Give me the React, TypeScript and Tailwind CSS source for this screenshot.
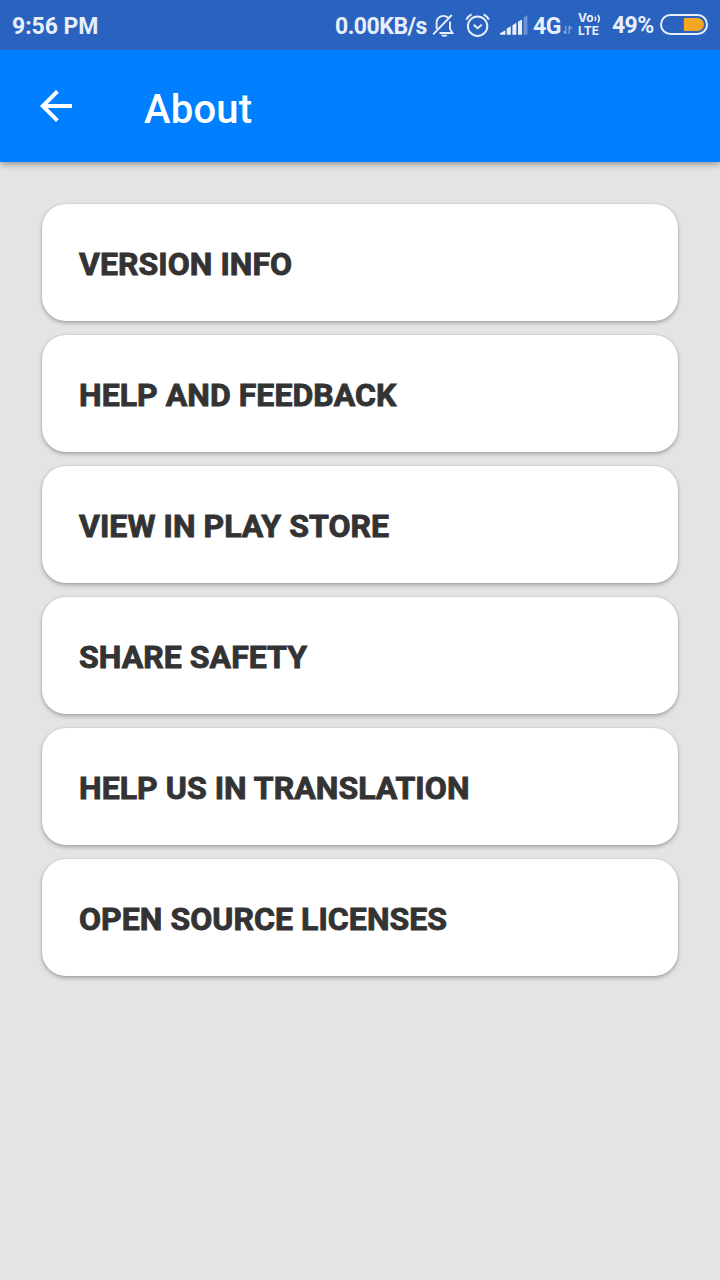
import React from "react";

const items: string[] = [
  "VERSION INFO",
  "HELP AND FEEDBACK",
  "VIEW IN PLAY STORE",
  "SHARE SAFETY",
  "HELP US IN TRANSLATION",
  "OPEN SOURCE LICENSES",
];

function MutedBell() {
  return (
    <svg className="ml-[5px] shrink-0" width="24" height="26" viewBox="0 0 24 26" fill="none" stroke="currentColor" strokeWidth="1.9">
      <path d="M4.6 17V10.5a6.9 6.9 0 0 1 11.6-4.7M18 9.5V17l2.5 4H7.5M1.2 22.4L19.8 3" />
      <path d="M9 22.8h6.5c-.6 1.5-1.8 2-3.2 2s-2.7-.5-3.3-2z" fill="currentColor" stroke="none" />
    </svg>
  );
}

function Alarm() {
  return (
    <svg className="ml-[9px] shrink-0" width="26" height="26" viewBox="0 0 26 26" fill="none" stroke="currentColor" strokeWidth="2">
      <circle cx="12.6" cy="14.2" r="9.7" />
      <path d="M8.7 12.7l3.9 3.5 4.2-3.5M1.3 7.7Q2.7 4.2 6.6 2.3M18.6 2.3Q22.5 4.2 23.9 7.7" />
    </svg>
  );
}

function Signal() {
  return (
    <svg className="ml-[9px] shrink-0" width="28" height="26" viewBox="0 0 28 26" fill="currentColor">
      <path d="M0 22.8v-1.6l5.4-3v4.6zM6.8 22.8v-6.2l4-2.4v8.6zM12.4 22.8v-9.6l4-2.4v12zM18 22.8V9.8l4-2.4v15.4z" />
      <path d="M23.6 22.8V5.6l3.8-2.6v19.8z" opacity=".35" />
    </svg>
  );
}

function DataArrows() {
  return (
    <svg className="ml-[2px] shrink-0" width="10" height="26" viewBox="0 0 10 26" fill="none" stroke="currentColor" strokeWidth="1.3" opacity=".5">
      <path d="M2.8 14v8M.4 19.2l2.4 2.6M6.2 22v-8M8.6 16.7l-2.4-2.5" />
    </svg>
  );
}

function Volte() {
  return (
    <div className="ml-[5px] flex h-[26px] w-[24px] shrink-0 flex-col font-['Inter',sans-serif]">
      <div className="flex h-[12px] items-center">
        <span className="w-[16px] text-[12px] leading-[12px] font-bold">Vo</span>
        <svg width="7" height="11" viewBox="0 0 7 11" fill="none" stroke="currentColor" strokeWidth="1.5">
          <path d="M1 3.7q1.3 2.1 0 4.2M3.8 2q2.9 3.8 0 7.6" />
        </svg>
      </div>
      <span className="text-[12px] leading-[14px] font-bold">LTE</span>
    </div>
  );
}

function StatusBar() {
  return (
    <div className="relative z-10 flex h-[50px] items-center bg-[#2962bf] pr-[11px] pl-[12px] text-[#e8eefa]">
      <span className="w-[323px] pt-[3px] text-[23px] leading-[26px] font-bold tracking-[-0.05px] whitespace-nowrap">9:56 PM</span>
      <span className="w-[92px] pt-[3px] text-[23px] leading-[26px] font-bold tracking-[-0.5px] whitespace-nowrap">0.00KB/s</span>
      <MutedBell />
      <Alarm />
      <Signal />
      <span className="ml-[5px] w-[28px] pt-[3px] text-[23px] leading-[26px] font-bold tracking-[-0.5px]">4G</span>
      <DataArrows />
      <Volte />
      <span className="ml-[10px] w-[42px] pt-[2px] text-[23px] leading-[26px] font-bold tracking-[-0.6px]">49%</span>
      <svg className="ml-[6px] shrink-0" width="48" height="26" viewBox="0 0 48 26" fill="none">
        <rect x="1" y="3" width="46" height="19" rx="9.5" stroke="#e8eefa" strokeWidth="2" />
        <path d="M24.8 6H37.5a6.5 6.5 0 0 1 0 13H24.8a1 1 0 0 1-1-1V7a1 1 0 0 1 1-1z" fill="#f5a623" />
      </svg>
    </div>
  );
}

export default function App() {
  return (
    <div className="flex h-[1280px] w-[720px] flex-col bg-[#e4e4e4] font-['Roboto',sans-serif]">
      <StatusBar />
      <header className="flex h-[112px] shrink-0 items-center bg-[#0080ff] pl-[40px] text-white shadow-[0_2px_7px_rgba(0,0,0,0.38)]">
        <svg width="32" height="32" viewBox="4 4 16 16" fill="currentColor">
          <path d="M20 11H7.83l5.59-5.59L12 4l-8 8 8 8 1.41-1.41L7.83 13H20v-2z" />
        </svg>
        <h1 className="mt-[7px] ml-[72px] text-[40px] leading-[48px] font-medium tracking-[0.2px]">About</h1>
      </header>
      <main className="flex flex-col gap-[14px] px-[42px] pt-[42px]">
        {items.map((label) => (
          <button
            key={label}
            className="flex h-[117px] items-center rounded-[24px] bg-white pt-[2px] pl-[37px] text-left text-[32px] leading-[38px] font-bold tracking-[0.05px] text-[#333333] shadow-[0_2px_4px_rgba(0,0,0,0.28),0_0_2px_rgba(0,0,0,0.12)] [-webkit-text-stroke:0.9px]"
          >
            {label}
          </button>
        ))}
      </main>
    </div>
  );
}
